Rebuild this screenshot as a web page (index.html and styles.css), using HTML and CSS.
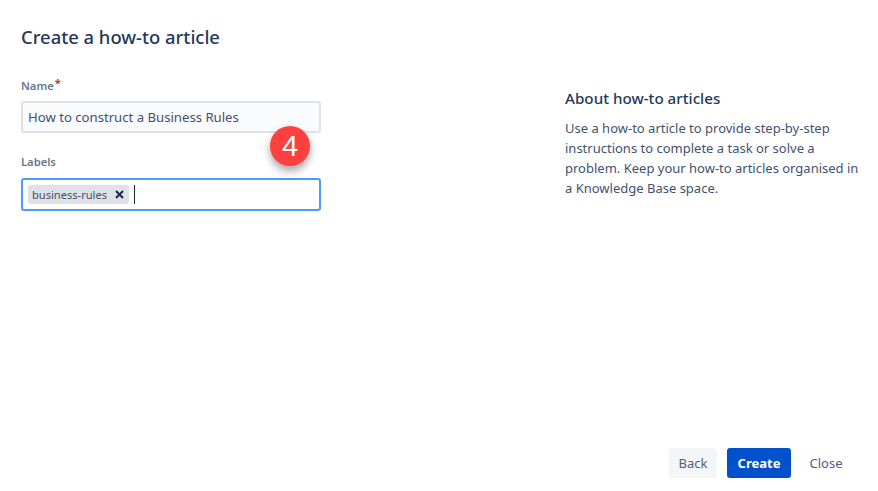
FILE: index.html
```html
<!DOCTYPE html>
<html lang="en">
<head>
    <meta charset="UTF-8">
    <meta name="viewport" content="width=device-width, initial-scale=1.0">
    <title>Create a how-to article</title>
    <link rel="stylesheet" href="styles.css">
</head>
<body>
    <div class="dialog">
        <h2 class="title">Create a how-to article</h2>
        <div class="content">
            <form class="form">
                <label class="field-label">Name<span class="required">*</span></label>
                <div class="input input-name">How to construct a Business Rules</div>
                <label class="field-label field-label-labels">Labels</label>
                <div class="input input-labels">
                    <span class="tag">business-rules
                        <svg class="tag-x" width="9" height="9" viewBox="0 0 9 9"><path d="M1 1l7 7M8 1L1 8" stroke="#172b4d" stroke-width="2"/></svg>
                    </span>
                    <span class="caret"></span>
                </div>
                <div class="step-badge">4</div>
            </form>
            <div class="about">
                <h3>About how-to articles</h3>
                <p>Use a how-to article to provide step-by-step instructions to complete a task or solve a problem. Keep your how-to articles organised in a Knowledge Base space.</p>
            </div>
        </div>
        <div class="footer">
            <button class="btn btn-back">Back</button>
            <button class="btn btn-create">Create</button>
            <button class="btn btn-close">Close</button>
        </div>
    </div>
</body>
</html>
```

FILE: styles.css
```css
html, body {
    margin: 0;
    height: 100%;
}
body {
    font-family: "Noto Sans", "Open Sans", sans-serif;
    background: white;
    color: #172b4d;
}
.dialog {
    box-sizing: border-box;
    height: 491px;
    padding: 25px 13px 0 21px;
    display: flex;
    flex-direction: column;
}
.title {
    margin: 0;
    font-size: 18.4px;
    line-height: 24px;
    font-weight: 500;
    color: #253858;
}
.content {
    display: flex;
    flex: 1;
    margin-top: 30px;
}
.form {
    position: relative;
    flex: none;
    width: 300px;
    margin-right: 244px;
}
.field-label {
    display: block;
    font-size: 11.2px;
    line-height: 14px;
    font-weight: 600;
    color: #6b778c;
    margin-bottom: 8px;
}
.field-label-labels {
    margin-top: 22px;
    margin-bottom: 9px;
}
.required {
    color: #bf2600;
    margin-left: 1px;
    position: relative;
    top: -3px;
}
.input {
    box-sizing: border-box;
    height: 32px;
    border: 2px solid #dfe1e6;
    border-radius: 3px;
    font-size: 13.15px;
    display: flex;
    align-items: center;
}
.input-name {
    background: #fafbfc;
    padding-left: 5px;
    color: #42526e;
}
.input-labels {
    height: 33px;
    border-color: #4c9aff;
    padding-left: 5px;
}
.tag {
    display: flex;
    align-items: center;
    gap: 8px;
    height: 19px;
    padding: 0 5px 0 4px;
    background: #dfe1e6;
    border-radius: 3px;
    font-size: 11.1px;
    color: #42526e;
}
.caret {
    width: 1px;
    height: 19px;
    background: #172b4d;
    margin-left: 5px;
}
.step-badge {
    position: absolute;
    left: 249px;
    top: 47px;
    width: 40px;
    height: 40px;
    border-radius: 50%;
    background: #ff4040;
    color: white;
    font-family: "Liberation Sans", sans-serif;
    font-size: 29px;
    line-height: 40px;
    text-align: center;
    box-shadow: 0 5px 8px rgba(0, 0, 0, 0.35);
}
.about {
    width: 300px;
    padding-top: 9px;
}
.about h3 {
    margin: 0 0 10px;
    font-size: 15.2px;
    line-height: 20px;
    font-weight: 500;
    color: #253858;
}
.about p {
    margin: 0;
    font-size: 13px;
    line-height: 20px;
    color: #42526e;
}
.footer {
    display: flex;
    justify-content: flex-end;
    gap: 10px;
    padding: 0 12px 13px 0;
}
.btn {
    height: 30px;
    border: none;
    border-radius: 3px;
    padding: 0;
    font-family: inherit;
    font-size: 13px;
    background: none;
    color: #505f79;
}
.btn-back {
    background: #f4f5f7;
    width: 48px;
}
.btn-create {
    background: #0052cc;
    color: white;
    font-weight: 700;
    width: 64px;
}
.btn-close {
    width: 50px;
    margin-right: 2px;
}
```
